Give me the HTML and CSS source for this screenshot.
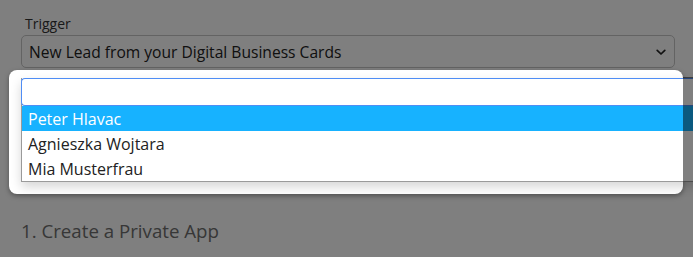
FILE: index.html
```html
<!DOCTYPE html>
<html>
<head>
<meta charset="utf-8">
<link rel="stylesheet" href="styles.css">
</head>
<body>
<div class="page">
  <div class="field">
    <label class="label">Trigger</label>
    <div class="select">
      <span class="select-text">New Lead from your Digital Business Cards</span>
      <svg class="chevron" width="10" height="7" viewBox="0 0 10 7"><path d="M1.2 1.3 L5 5 L8.8 1.3" fill="none" stroke="#222" stroke-width="1.7" stroke-linecap="round" stroke-linejoin="round"/></svg>
    </div>
  </div>
  <h2 class="step">1. Create a Private App</h2>
</div>
<div class="overlay"></div>
<div class="spotlight"></div>
<div class="dropdown">
  <div class="search"></div>
  <ul class="options">
    <li class="option active">Peter Hlavac</li>
    <li class="option">Agnieszka Wojtara</li>
    <li class="option">Mia Musterfrau</li>
  </ul>
</div>
</body>
</html>
```
FILE: styles.css
```css
html, body {
  margin: 0;
  padding: 0;
  background: #ffffff;
  overflow: hidden;
}
body {
  font-family: "Open Sans", "Noto Sans", sans-serif;
  color: #333;
  width: 693px;
  height: 257px;
  position: relative;
}
.page {
  padding: 14px 18px 0 21px;
}
.field {
  display: flex;
  flex-direction: column;
}
.label {
  font-size: 14px;
  line-height: 20px;
  color: #333;
  padding-left: 4px;
  margin-bottom: 1px;
}
.select {
  box-sizing: border-box;
  height: 33px;
  border: 1px solid #c6c6c6;
  border-radius: 5px;
  display: flex;
  align-items: center;
  justify-content: space-between;
  padding: 0 8px 0 7px;
  font-size: 15.6px;
  color: #222;
}
.chevron {
  margin-top: 2px;
}
.step {
  margin: 151px 0 0 0;
  font-weight: 400;
  font-size: 18.7px;
  line-height: 24px;
  color: #6e6e6e;
}
.overlay {
  position: absolute;
  inset: 0;
  background: rgba(0, 0, 0, 0.5);
  z-index: 10;
}
.spotlight {
  position: absolute;
  left: 9px;
  top: 70px;
  width: 674px;
  height: 124px;
  background: #fff;
  border-radius: 8px;
  box-shadow: 0 2px 5px rgba(0, 0, 0, 0.35);
  z-index: 11;
}
.dropdown {
  position: absolute;
  left: 21px;
  top: 78px;
  width: 700px;
  z-index: 12;
  background: #fff;
  box-shadow: 0 5px 10px rgba(0, 0, 0, 0.16);
  border-left: 1px solid #9a9a9a;
  border-bottom: 1px solid #9a9a9a;
}
.dropdown::after {
  content: "";
  position: absolute;
  left: 661px;
  top: -1px;
  right: 0;
  bottom: -1px;
  background: rgba(0, 0, 0, 0.5);
}
.search {
  box-sizing: border-box;
  height: 28px;
  margin-left: -1px;
  border: 1px solid #4f8df5;
  border-right: 0;
  border-radius: 4px 0 0 4px;
  background: #fff;
}
.options {
  list-style: none;
  margin: 0;
  padding: 0;
}
.option {
  height: 25px;
  line-height: 27px;
  padding-left: 6px;
  font-size: 16px;
  color: #222;
}
.option.active {
  background: #17b2ff;
  color: #fff;
}
```
